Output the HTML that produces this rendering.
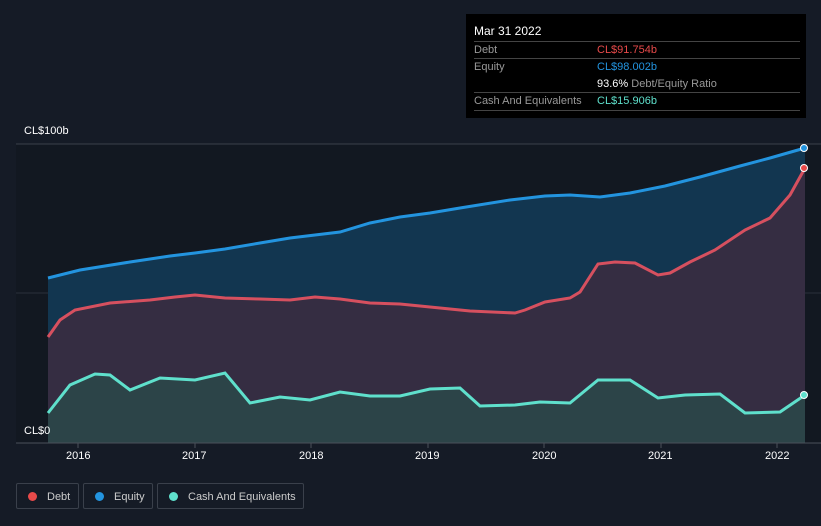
<!DOCTYPE html>
<html><head><style>
body{margin:0;background:#151b26;font-family:"Liberation Sans",sans-serif;}
.wrap{position:relative;width:821px;height:526px;overflow:hidden;background:#151b26}
.tt{position:absolute;left:466px;top:14px;width:340px;height:104px;background:#000;color:#ddd;font-size:11px}
.tt .r{position:absolute;left:8px;right:6px;border-top:1px solid #444;height:17px;line-height:17px}
.lab{color:#999}
.v{position:absolute;left:123px;top:0}
.ax{position:absolute;color:#fff;font-size:11px}
.leg{position:absolute;top:483px;height:26px;border:1px solid #3a404b;border-radius:2px;color:#ccc;font-size:11px;line-height:26px;box-sizing:border-box}
.dot{display:inline-block;width:9px;height:9px;border-radius:50%;margin:0 10px 0 11px;vertical-align:-1px}
</style></head><body><div class="wrap">
<svg width="821" height="526" style="position:absolute;left:0;top:0">
<rect x="16" y="144" width="805" height="299" fill="#121821"/>
<line x1="16" y1="144" x2="821" y2="144" stroke="#3a404a"/>
<line x1="16" y1="293" x2="821" y2="293" stroke="#2a303a"/>
<path d="M48,278 L80,270 L130,262 L170,256 L195,253 L225,249 L260,243 L290,238 L340,232 L370,223 L400,217 L430,213 L460,208 L510,200 L545,196 L570,195 L600,197 L630,193 L665,186 L700,177 L740,166 L770,158 L805,148 L805,443 L48,443Z" fill="#123650"/>
<path d="M48,337 L60,320 L75,310 L110,303 L150,300 L175,297 L195,295 L225,298 L260,299 L290,300 L315,297 L340,299 L370,303 L400,304 L430,307 L470,311 L515,313 L525,310 L545,302 L570,298 L580,292 L598,264 L615,262 L635,263 L658,275 L670,273 L690,262 L715,250 L745,230 L770,218 L790,195 L805,168 L805,443 L48,443Z" fill="#352d42"/>
<path d="M48,413 L70,385 L95,374 L110,375 L130,390 L160,378 L195,380 L225,373 L250,403 L280,397 L310,400 L340,392 L370,396 L400,396 L430,389 L460,388 L480,406 L515,405 L540,402 L570,403 L598,380 L630,380 L658,398 L685,395 L720,394 L745,413 L780,412 L805,395 L805,443 L48,443Z" fill="#2c4448"/>
<path d="M48,278 L80,270 L130,262 L170,256 L195,253 L225,249 L260,243 L290,238 L340,232 L370,223 L400,217 L430,213 L460,208 L510,200 L545,196 L570,195 L600,197 L630,193 L665,186 L700,177 L740,166 L770,158 L805,148" fill="none" stroke="#2394df" stroke-width="3"/>
<path d="M48,337 L60,320 L75,310 L110,303 L150,300 L175,297 L195,295 L225,298 L260,299 L290,300 L315,297 L340,299 L370,303 L400,304 L430,307 L470,311 L515,313 L525,310 L545,302 L570,298 L580,292 L598,264 L615,262 L635,263 L658,275 L670,273 L690,262 L715,250 L745,230 L770,218 L790,195 L805,168" fill="none" stroke="#d6505f" stroke-width="3"/>
<path d="M48,413 L70,385 L95,374 L110,375 L130,390 L160,378 L195,380 L225,373 L250,403 L280,397 L310,400 L340,392 L370,396 L400,396 L430,389 L460,388 L480,406 L515,405 L540,402 L570,403 L598,380 L630,380 L658,398 L685,395 L720,394 L745,413 L780,412 L805,395" fill="none" stroke="#5fe0cc" stroke-width="3"/>
<line x1="16" y1="443" x2="821" y2="443" stroke="#4a505a"/>
<g stroke="#4a505a"><line x1="78" y1="443" x2="78" y2="448"/><line x1="195" y1="443" x2="195" y2="448"/><line x1="311" y1="443" x2="311" y2="448"/><line x1="428" y1="443" x2="428" y2="448"/><line x1="544" y1="443" x2="544" y2="448"/><line x1="661" y1="443" x2="661" y2="448"/><line x1="777" y1="443" x2="777" y2="448"/></g>
<circle cx="804" cy="148" r="3.5" fill="#2394df" stroke="#fff" stroke-width="1"/>
<circle cx="804" cy="168" r="3.5" fill="#e84a4a" stroke="#fff" stroke-width="1"/>
<circle cx="804" cy="395" r="3.5" fill="#5fe0cc" stroke="#fff" stroke-width="1"/>
</svg>
<div class="ax" style="left:24px;top:125px">CL$100b</div>
<div class="ax" style="left:24px;top:425px">CL$0</div>
<div class="ax" style="left:66px;top:450px">2016</div>
<div class="ax" style="left:182px;top:450px">2017</div>
<div class="ax" style="left:299px;top:450px">2018</div>
<div class="ax" style="left:415px;top:450px">2019</div>
<div class="ax" style="left:532px;top:450px">2020</div>
<div class="ax" style="left:648px;top:450px">2021</div>
<div class="ax" style="left:765px;top:450px">2022</div>
<div class="tt">
<div style="position:absolute;left:8px;top:10px;color:#fff;font-size:12px">Mar 31 2022</div>
<div class="r" style="top:27px"><span class="lab">Debt</span><span class="v" style="color:#e84a4a">CL$91.754b</span></div>
<div class="r" style="top:44px"><span class="lab">Equity</span><span class="v" style="color:#2394df">CL$98.002b</span></div>
<div style="position:absolute;left:131px;top:62px;line-height:17px"><b style="color:#fff;font-weight:normal">93.6%</b> <span class="lab">Debt/Equity Ratio</span></div>
<div class="r" style="top:78px;border-bottom:1px solid #444"><span class="lab">Cash And Equivalents</span><span class="v" style="color:#5fe0cc">CL$15.906b</span></div>
</div>
<div class="leg" style="left:16px;width:63px"><span class="dot" style="background:#e84a4a"></span>Debt</div>
<div class="leg" style="left:83px;width:70px"><span class="dot" style="background:#2394df"></span>Equity</div>
<div class="leg" style="left:157px;width:147px"><span class="dot" style="background:#5fe0cc"></span>Cash And Equivalents</div>
</div></body></html>
